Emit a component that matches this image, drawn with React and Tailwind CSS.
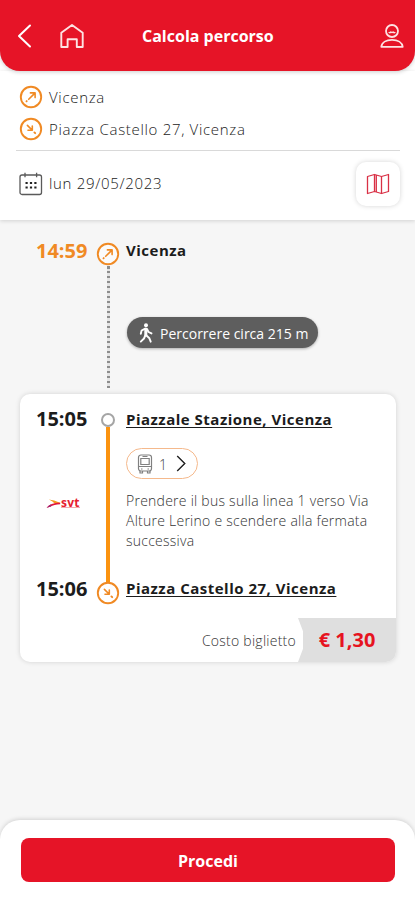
import React from 'react';

function Marker({ arrival, className = '' }) {
  return (
    <svg viewBox="0 0 24 24" className={'block h-6 w-6 shrink-0 ' + className} fill="none" stroke="#f08a24" strokeLinecap="round" strokeLinejoin="round">
      <circle cx="12" cy="12" r="10.2" strokeWidth="1.9" fill="white" fillOpacity="0.6" />
      {arrival ? (
        <g strokeWidth="1.6">
          <path d="M8.4 8.4l4.4 4.4M13.3 9v4.3H9" />
          <path d="M15.4 15.4l.8.8" strokeWidth="1.9" />
        </g>
      ) : (
        <g strokeWidth="1.6">
          <path d="M9.7 14.3l6.2-6.2M11.4 7.9h4.7v4.7" />
          <path d="M7.5 16.3l.2-.2" strokeWidth="1.9" />
        </g>
      )}
    </svg>
  );
}

function Header() {
  return (
    <header className="relative z-10 flex h-[71px] shrink-0 items-center rounded-b-[20px] bg-[#e61427] pl-[17px] pr-[11px] shadow-[0_1px_4px_rgba(0,0,0,0.2)]">
      <svg viewBox="0 0 15 24" className="mt-px h-6 w-[15px]" fill="none" stroke="#fff" strokeWidth="2" strokeLinecap="round" strokeLinejoin="round">
        <path d="M13 1.5L2 12l11 10.500" />
      </svg>
      <svg viewBox="0 0 24 24" className="ml-7 mt-px h-6 w-6" fill="none" stroke="#fde3e3" strokeWidth="1.9" strokeLinejoin="round">
        <path d="M1.300 8.800L12 1l10.700 7.800v14.200h-5.900v-7.700H7.600V23H1.300z" />
      </svg>
      <h1 className="ml-[58px] whitespace-nowrap text-[16px] font-bold leading-6 text-white">Calcola percorso</h1>
      <svg viewBox="0 0 24 24" className="ml-auto mt-px h-6 w-6" fill="none" stroke="#fde3e3" strokeWidth="1.800">
        <circle cx="12" cy="7" r="6" />
        <path d="M8.700 8q1 1.500 2.200 0q1.100 1.200 2.200 0q1.200 1.500 2.200 0" strokeWidth="1.300" />
        <path d="M1.300 22.800c.5-4.400 5-7 10.700-7s10.200 2.600 10.700 7z" strokeLinejoin="round" />
      </svg>
    </header>
  );
}

function Search() {
  return (
    <section className="h-[149px] shrink-0 bg-white px-4 pt-[10px] text-[15px] font-light tracking-[0.68px] text-[#222] shadow-[0_1px_4px_rgba(0,0,0,0.15)]">
      <div className="flex h-8 items-center gap-[6px] pl-[3px]">
        <Marker />
        <span className="whitespace-nowrap">Vicenza</span>
      </div>
      <div className="flex h-8 items-center gap-[6px] pl-[3px]">
        <Marker arrival />
        <span className="whitespace-nowrap">Piazza Castello 27, Vicenza</span>
      </div>
      <div className="mr-[-1px] mt-[5px] h-px bg-[#d9d9d9]" />
      <div className="mr-[-2px] flex h-[65px] items-center pl-[3px]">
        <svg viewBox="0 0 24 24" className="h-6 w-6" fill="none" stroke="#5a5a5a" strokeWidth="1.300">
          <rect x="1" y="3" width="21.500" height="19.500" rx="2" />
          <path d="M6 .8v4.400M17.600 .8v4.400" />
          <path d="M6.500 11h2.200M10.900 11h2.200M15.300 11h2.200M6.500 15.500h2.200M10.900 15.500h2.200M15.300 15.500h2.200" stroke="#222" strokeWidth="2.200" />
        </svg>
        <span className="ml-[6px] whitespace-nowrap">lun 29/05/2023</span>
        <button className="ml-auto mr-px flex h-11 w-11 items-center justify-center rounded-[10px] bg-white shadow-[0_0_5px_rgba(0,0,0,0.17)]">
          <svg viewBox="0 0 24 22" className="h-[22px] w-6" fill="none" stroke="#d93045" strokeWidth="1.300" strokeLinejoin="round">
            <path d="M1.500 3.500L8.500 1.500l7 2 7-2v17l-7 2-7-2-7 2z" />
            <path d="M8.500 1.500v17M10.300 2.100v17M15.500 3.500v17" />
          </svg>
        </button>
      </div>
    </section>
  );
}

function Walk() {
  return (
    <div className="flex h-[174px] pl-5 pt-[18px]">
      <div className="w-[76px] pl-4 text-[20px] font-bold leading-[26px] text-[#f08a24]">14:59</div>
      <div className="flex w-6 flex-col items-center pt-1">
        <Marker />
        <div className="h-[122px] w-[3px] bg-[repeating-linear-gradient(to_bottom,#8d8d8d_0_2.5px,#e4e4e4_2.5px_5px)]" />
      </div>
      <div className="ml-[6px]">
        <p className="text-[15px] font-bold leading-6 tracking-[0.5px] text-[#1c1c1c]">Vicenza</p>
        <div className="ml-px mt-[55px] flex h-[31px] w-[191px] items-center rounded-full bg-[#5e5e5e] pl-3 text-white shadow-[0_1px_3px_rgba(0,0,0,0.3)]">
          <svg viewBox="0 0 14 20" className="h-5 w-[14px]" fill="none" stroke="#fff" strokeLinecap="round" strokeLinejoin="round">
            <circle cx="7" cy="2.300" r="2" fill="#fff" stroke="none" />
            <path d="M6.800 6v6" strokeWidth="3" />
            <path d="M5.800 5.800L2.600 7.500l-.8 3.300M8 6l1.500 3 3 1.400M6.300 12.500L5 15.500 1.800 18.600M7.200 12.300l3.200 3 1.300 3.400" strokeWidth="1.900" />
          </svg>
          <span className="ml-[7px] mt-px whitespace-nowrap text-[14px]">Percorrere circa 215 m</span>
        </div>
      </div>
    </div>
  );
}

function Ride() {
  return (
    <article className="ml-5 h-[268px] w-[376px] overflow-hidden rounded-[10px] bg-white shadow-[0_0_5px_rgba(0,0,0,0.15)]">
      <div className="flex h-[224px]">
        <div className="flex w-[76px] flex-col pl-4 pt-3 text-[20px] font-bold leading-[26px] text-[#1c1c1c]">
          <span>15:05</span>
          <div className="ml-[10px] mt-[63px] flex h-4 w-9 items-center">
            <svg viewBox="0 0 15 12" className="h-[11px] w-[15px] shrink-0">
              <path d="M2.500 1.500Q8 2 14.500 5.300L9 6.200Q7 3.500 2.500 1.500z" fill="#f39a1f" />
              <path d="M0 10.500Q4 5 14.800 4.800V6.700Q8 6.700 4 9.500z" fill="#e3163a" />
              <path d="M0 10.500l4-3.500 2 1-2 1.500z" fill="#a02575" />
            </svg>
            <span className="w-[19px] border-b border-[#f3a9ae] text-[12px] font-bold leading-[9px] tracking-[0.2px] text-[#e6202f]">svt</span>
          </div>
          <span className="mt-[65px]">15:06</span>
        </div>
        <div className="flex w-6 flex-col items-center pt-[19px]">
          <div className="h-[14px] w-[14px] shrink-0 rounded-full border-2 border-[#a5a5a5] bg-white" />
          <div className="h-[156px] w-[4px] shrink-0 bg-[#fb9310]" />
          <Marker arrival className="mt-[-2px]" />
        </div>
        <div className="ml-[6px] flex flex-col items-start pt-3">
          <p className="whitespace-nowrap text-[15px] font-bold leading-[26px] tracking-[0.5px] text-[#1c1c1c] underline decoration-1 underline-offset-2">Piazzale Stazione, Vicenza</p>
          <button className="mt-4 flex h-[31px] w-[72px] items-center rounded-full border border-[#f5b98c] pl-[10px] text-[#444]">
            <svg viewBox="0 0 16 20" className="h-5 w-4" fill="none" stroke="#808080" strokeWidth="1.200">
              <rect x="1.500" y="1" width="13" height="16" rx="2.500" />
              <path d="M3.800 4.500h8.400v6H3.800zM1.500 12.500h13M5.500 2.500h5M4 15h1.500M10.500 15H12M3 17v2h2.500v-2M10.500 17v2H13v-2" />
            </svg>
            <span className="ml-[6px] mt-px text-[14px] font-light">1</span>
            <svg viewBox="0 0 10 18" className="ml-[9px] h-[17px] w-[10px]" fill="none" stroke="#222" strokeWidth="1.500">
              <path d="M1 1l8 8-8 8" />
            </svg>
          </button>
          <p className="mt-[12px] whitespace-nowrap text-[14px] font-light leading-5 tracking-[0.25px] text-[#333]">
            Prendere il bus sulla linea 1 verso Via<br />Alture Lerino e scendere alla fermata<br />successiva
          </p>
          <p className="mt-[24px] whitespace-nowrap text-[15px] font-bold leading-[26px] tracking-[0.5px] text-[#1c1c1c] underline decoration-1 underline-offset-2">Piazza Castello 27, Vicenza</p>
        </div>
      </div>
      <div className="flex h-11 items-center justify-end">
        <span className="mr-[2px] whitespace-nowrap text-[14px] font-light tracking-[0.25px] text-[#333]">Costo biglietto</span>
        <div className="flex h-11 w-[98px] items-center justify-center bg-[#dfdfdf] text-[20px] font-bold text-[#e6141f] [clip-path:polygon(0_0,100%_0,100%_100%,0_100%,5px_70%,5px_30%)]">€ 1,30</div>
      </div>
    </article>
  );
}

export default function App() {
  return (
    <div className="flex h-[900px] w-[415px] flex-col overflow-hidden bg-[#f6f6f6] font-['Open_Sans','Noto_Sans',sans-serif]">
      <div className="bg-white"><Header /></div>
      <Search />
      <main className="flex-1">
        <Walk />
        <Ride />
      </main>
      <footer className="h-20 shrink-0 rounded-t-[20px] bg-white px-5 pt-[18px] shadow-[0_-1px_4px_rgba(0,0,0,0.15)]">
        <button className="ml-px flex h-11 w-[374px] items-center justify-center rounded-[8px] bg-[#e61427] pt-px text-[16px] font-bold text-white">Procedi</button>
      </footer>
    </div>
  );
}
